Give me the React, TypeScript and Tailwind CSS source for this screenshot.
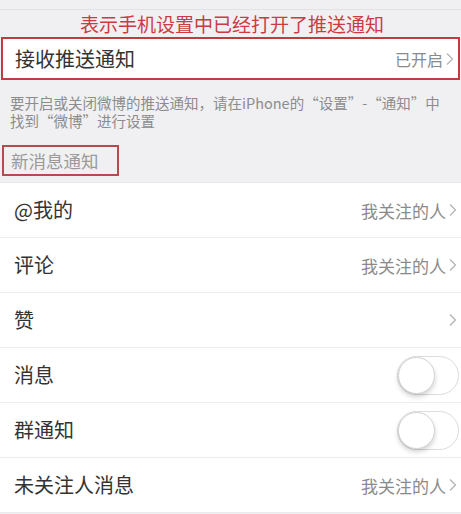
import React from "react";

const Chevron = () => (
  <svg width="8" height="14" viewBox="0 0 8 14" className="ml-[3px] shrink-0">
    <path d="M1 1.5 L6.5 7 L1 12.5" fill="none" stroke="#b5b5b8" strokeWidth="1.3" />
  </svg>
);

const Toggle = () => (
  <div className="relative w-[62px] h-[39px] rounded-full border border-[#dcdcdc] bg-white mr-[-2px]">
    <div className="absolute left-[0px] top-[0px] w-[37px] h-[37px] rounded-full bg-white border border-[#d4d4d4] shadow-[0_3px_5px_rgba(0,0,0,0.18)]" />
  </div>
);

type Row = { label: string; value?: string; chevron?: boolean; toggle?: boolean };

const rows: Row[] = [
  { label: "@我的", value: "我关注的人", chevron: true },
  { label: "评论", value: "我关注的人", chevron: true },
  { label: "赞", chevron: true },
  { label: "消息", toggle: true },
  { label: "群通知", toggle: true },
  { label: "未关注人消息", value: "我关注的人", chevron: true },
];

export default function App() {
  return (
    <div
      className="w-[461px] h-[514px] overflow-hidden bg-[#f0f0f2]"
      style={{ fontFamily: '"Noto Sans CJK SC", "Noto Sans", sans-serif' }}
    >
      <div className="h-[10px] border-b border-[#e2e2e4]" />
      <div className="h-[27px] flex items-center justify-center text-[19px] leading-none text-[#cc3a44] pl-[3px]">
        表示手机设置中已经打开了推送通知
      </div>
      <div className="mx-[1px] h-[43px] border-2 border-[#c13b41] bg-white flex items-center pl-[12px] pr-[4px]">
        <span className="text-[20px] leading-none text-[#333333]">接收推送通知</span>
        <div className="ml-auto flex items-center">
          <span className="text-[16px] leading-none text-[#8a8a8a]">已开启</span>
          <Chevron />
        </div>
      </div>
      <p className="pt-[14px] px-[10px] text-[14.5px] leading-[18px] text-[#8c8c8c] whitespace-nowrap">
        要开启或关闭微博的推送通知，请在iPhone的“设置”-“通知”中
        <br />
        找到“微博”进行设置
      </p>
      <div className="mt-[15px] ml-[2px] w-[117px] h-[31px] border-2 border-[#b54a4f] flex items-center pl-[7px] text-[17.5px] leading-none text-[#9a9a9a]">
        新消息通知
      </div>
      <div className="mt-[6px] bg-white border-t border-[#e6e6e8]">
        {rows.map((r, i) => (
          <div
            key={i}
            className="h-[55px] flex items-center pl-[14px] pr-[4px] border-b border-[#ececee]"
          >
            <span className="text-[20px] leading-none text-[#333333]">{r.label}</span>
            <div className="ml-auto flex items-center">
              {r.value && (
                <span className="text-[17px] leading-none text-[#8a8a8a]">{r.value}</span>
              )}
              {r.chevron && <Chevron />}
              {r.toggle && <Toggle />}
            </div>
          </div>
        ))}
      </div>
    </div>
  );
}
